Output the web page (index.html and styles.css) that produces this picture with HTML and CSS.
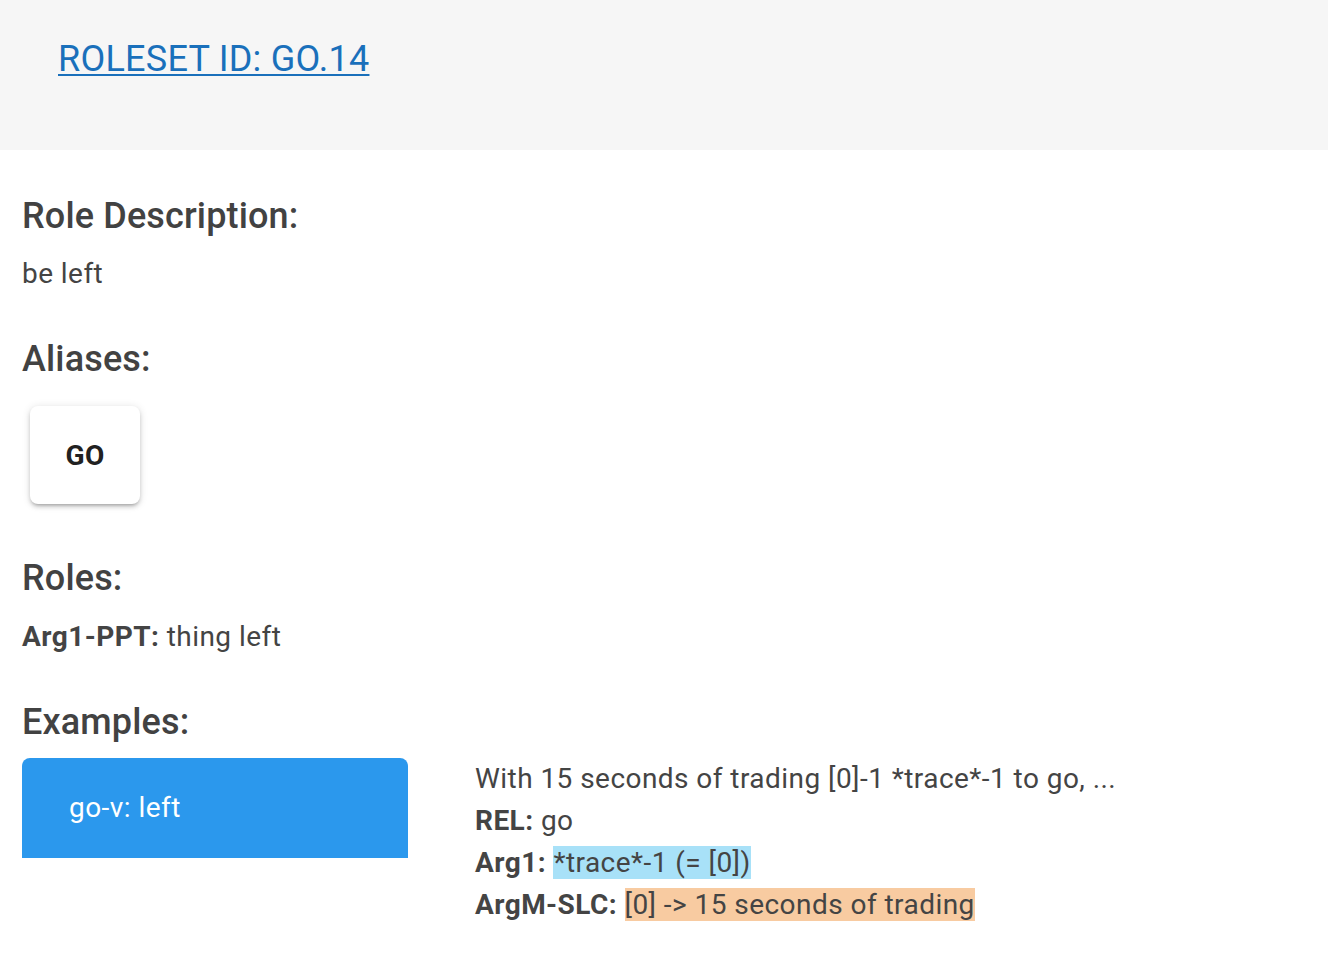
FILE: index.html
```html
<!DOCTYPE html>
<html>
<head>
<meta charset="utf-8">
<link rel="stylesheet" href="styles.css">
</head>
<body>
<header class="top">
  <a class="roleset-link" href="#">ROLESET ID: GO.14</a>
</header>
<main class="content">
  <h2 class="section-title first">Role Description:</h2>
  <p class="text">be left</p>

  <h2 class="section-title">Aliases:</h2>
  <div class="aliases">
    <div class="alias-card">GO</div>
  </div>

  <h2 class="section-title roles-title">Roles:</h2>
  <p class="text"><b>Arg1-PPT:</b> thing left</p>

  <h2 class="section-title examples-title">Examples:</h2>
  <div class="example">
    <div class="example-tab">go-v: left</div>
    <div class="example-body">
      <div class="line">With 15 seconds of trading [0]-1 *trace*-1 to go, ...</div>
      <div class="line"><b>REL:</b> go</div>
      <div class="line"><b>Arg1:</b> <span class="hl-blue">*trace*-1 (= [0])</span></div>
      <div class="line"><b>ArgM-SLC:</b> <span class="hl-orange">[0] -&gt; 15 seconds of trading</span></div>
    </div>
  </div>
</main>
</body>
</html>
```

FILE: styles.css
```css
html, body {
  margin: 0;
  padding: 0;
  background: #ffffff;
}
body {
  font-family: Roboto, "Liberation Sans", sans-serif;
  color: #444444;
}
.top {
  background: #f6f6f6;
  height: 150px;
  box-sizing: border-box;
  padding: 38px 0 0 58px;
}
.roleset-link {
  font-size: 36px;
  line-height: 42px;
  letter-spacing: 0.25px;
  color: #1a70bb;
  text-decoration: underline;
  text-decoration-thickness: 2px;
  text-underline-offset: 3px;
}
.content {
  padding: 0 22px;
}
.section-title {
  font-size: 36px;
  line-height: 42px;
  font-weight: 500;
  letter-spacing: 0.15px;
  margin: 43px 0 16px 0;
  color: #424242;
}
.section-title.first {
  margin-top: 45px;
}
.section-title.roles-title {
  margin-top: 53px;
  margin-bottom: 17px;
}
.section-title.examples-title {
  margin-bottom: 15px;
}
.text {
  font-size: 28px;
  line-height: 42px;
  letter-spacing: 0.45px;
  margin: 0;
}
.text b, .line b {
  font-weight: 700;
}
.aliases {
  display: flex;
  padding: 10px 0 0 8px;
}
.alias-card {
  width: 110px;
  height: 98px;
  display: flex;
  align-items: center;
  justify-content: center;
  background: #fff;
  border-radius: 8px;
  box-shadow: 0 3px 3px -2px rgba(0,0,0,0.2), 0 3px 4px 0 rgba(0,0,0,0.14), 0 1px 8px 0 rgba(0,0,0,0.12);
  font-size: 28px;
  font-weight: 700;
  letter-spacing: 0.4px;
  color: #212121;
}
.example {
  display: flex;
  align-items: flex-start;
  gap: 67px;
}
.example-tab {
  width: 386px;
  height: 100px;
  box-sizing: border-box;
  background: #2b98ed;
  color: #ffffff;
  border-radius: 8px 8px 0 0;
  display: flex;
  align-items: center;
  padding-left: 47px;
  font-size: 28px;
  line-height: 42px;
  letter-spacing: 0.45px;
  flex-shrink: 0;
}
.example-body {
  font-size: 28px;
  line-height: 42px;
  letter-spacing: 0.45px;
}
.hl-blue {
  background: #a8e1f8;
}
.hl-orange {
  background: #f8cba1;
}
```
